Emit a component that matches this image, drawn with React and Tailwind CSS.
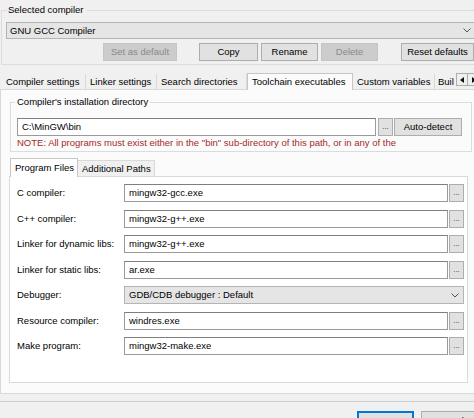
import React from "react";

function Chevron() {
  return (
    <svg width="8" height="5" viewBox="0 0 8 5">
      <path d="M0.5 0.5 L4 4 L7.5 0.5" fill="none" stroke="#555" strokeWidth="1" />
    </svg>
  );
}

function Btn({ children, className = "", disabled = false }) {
  return (
    <div
      className={
        "flex h-[18px] shrink-0 items-center justify-center border leading-[12px] " +
        (disabled
          ? "border-[#c4c4c4] bg-[#cccccc] text-[#8a8a8a] "
          : "border-[#adadad] bg-[#e1e1e1] text-[#000] ") +
        className
      }
    >
      {children}
    </div>
  );
}

function Dots({ className = "" }) {
  return (
    <div
      className={
        "flex h-[18px] w-[15px] shrink-0 items-center justify-center border border-[#adadad] bg-[#e1e1e1] text-[8px] leading-[8px] text-[#333] " +
        className
      }
    >
      ...
    </div>
  );
}

function Input({ value, className = "" }) {
  return (
    <div
      className={
        "flex h-[18px] shrink-0 items-center border border-[#9a9a9a] border-t-[#7f7f7f] bg-white pl-[4px] leading-[12px] text-[#000] " +
        className
      }
    >
      {value}
    </div>
  );
}

const rows = [
  ["C compiler:", "mingw32-gcc.exe"],
  ["C++ compiler:", "mingw32-g++.exe"],
  ["Linker for dynamic libs:", "mingw32-g++.exe"],
  ["Linker for static libs:", "ar.exe"],
  ["Debugger:", null],
  ["Resource compiler:", "windres.exe"],
  ["Make program:", "mingw32-make.exe"],
];

export default function App() {
  return (
    <div className="relative h-[418px] w-[474px] overflow-hidden bg-[#f0f0f0] font-['Liberation_Sans',Arial,sans-serif] text-[9.5px] text-[#000]">
      {/* Selected compiler group */}
      <fieldset className="ml-[1px] mt-[4px] w-[480px] border border-[#dcdcdc] pb-[3px]">
        <legend className="ml-[5px] px-[1px] pr-[3px] leading-[12px]">Selected compiler</legend>
        <div className="ml-[4px] mt-[6px] flex h-[17px] w-[470px] items-center justify-between border border-[#b4b4b4] bg-[#e5e5e5] pl-[3px] pr-[4px]">
          <span className="leading-[12px]">GNU GCC Compiler</span>
          <Chevron />
        </div>
        <div className="mt-[4px] flex pl-[101px]">
          <Btn disabled className="w-[74px]">Set as default</Btn>
          <Btn className="ml-[22px] w-[59px]">Copy</Btn>
          <Btn className="ml-[3px] w-[57px]">Rename</Btn>
          <Btn disabled className="ml-[3px] w-[57px]">Delete</Btn>
          <Btn className="ml-[23px] w-[73px]">Reset defaults</Btn>
        </div>
      </fieldset>

      {/* Main tabs */}
      <div className="relative z-10 -mb-px mt-[8px] flex h-[17px] items-end">
        <div className="mb-px flex h-[15px] w-[86px] shrink-0 items-center border-r border-[#d9d9d9] pl-[6px] leading-[12px] whitespace-nowrap">Compiler settings</div>
        <div className="mb-px flex h-[15px] w-[71px] shrink-0 items-center border-r border-[#d9d9d9] pl-[4px] leading-[12px] whitespace-nowrap">Linker settings</div>
        <div className="mb-px flex h-[15px] w-[90px] shrink-0 items-center border-r border-[#d9d9d9] pl-[4px] leading-[12px] whitespace-nowrap">Search directories</div>
        <div className="flex h-[17px] w-[106px] shrink-0 items-center border border-b-0 border-[#c6c6c6] bg-[#fbfbfb] pl-[4px] pb-[1px] leading-[12px] whitespace-nowrap">Toolchain executables</div>
        <div className="mb-px flex h-[15px] w-[82px] shrink-0 items-center border-r border-[#d9d9d9] pl-[4px] leading-[12px] whitespace-nowrap">Custom variables</div>
        <div className="mb-px flex h-[15px] w-[19px] shrink-0 items-center overflow-hidden pl-[3px] leading-[12px] whitespace-nowrap">Build options</div>
        {/* scroll arrows overlay */}
        <div className="absolute left-[456px] top-[0px] flex h-[13px]">
          <div className="flex h-[13px] w-[12px] items-center justify-center border border-[#adadad] bg-[#f0f0f0]">
            <svg width="4" height="6" viewBox="0 0 4 6"><polygon points="4,0 0,3 4,6" fill="#111" /></svg>
          </div>
          <div className="flex h-[13px] w-[12px] items-center justify-center border border-l-0 border-[#adadad] bg-[#f0f0f0]">
            <svg width="4" height="6" viewBox="0 0 4 6"><polygon points="0,0 4,3 0,6" fill="#111" /></svg>
          </div>
        </div>
      </div>

      {/* Tab page */}
      <div className="h-[305px] w-[480px] border border-[#d9d9d9] bg-[#fbfbfb]">
        <fieldset className="ml-[9px] mt-[6px] w-[462px] border border-[#dcdcdc] pb-[2px]">
          <legend className="ml-[4px] px-[2px] leading-[12px]">Compiler's installation directory</legend>
          <div className="mt-[10px] flex pl-[6px]">
            <Input value="C:\MinGW\bin" className="w-[359px]" />
            <Dots className="ml-[2px]" />
            <Btn className="ml-[1px] w-[68px]">Auto-detect</Btn>
          </div>
          <div className="mt-[1px] pl-[6px] leading-[12px] text-[#a52a2a] whitespace-nowrap">
            NOTE: All programs must exist either in the "bin" sub-directory of this path, or in any of the
          </div>
        </fieldset>

        {/* Inner tabs */}
        <div className="relative z-10 -mb-px ml-[9px] mt-[6px] flex h-[19px] items-end">
          <div className="flex h-[19px] w-[68px] shrink-0 items-center border border-b-0 border-[#c6c6c6] bg-white pl-[4px] pb-[1px] leading-[12px]">Program Files</div>
          <div className="mb-px flex h-[16px] w-[77px] shrink-0 items-center border border-b-0 border-l-0 border-[#d9d9d9] bg-[#f0f0f0] pl-[4px] leading-[12px]">Additional Paths</div>
        </div>
        <div className="ml-[8px] flex h-[207px] w-[459px] flex-col gap-[7.5px] border border-[#d9d9d9] bg-white pl-[7px] pt-[7px]">
          {rows.map(([label, value]) => (
            <div key={label} className="flex h-[18px] items-center">
              <div className="w-[107px] shrink-0 leading-[12px]">{label}</div>
              {value === null ? (
                <div className="flex h-[18px] w-[340px] shrink-0 items-center justify-between border border-[#b4b4b4] bg-[#e5e5e5] pl-[4px] pr-[4px]">
                  <span className="leading-[12px]">GDB/CDB debugger : Default</span>
                  <Chevron />
                </div>
              ) : (
                <>
                  <Input value={value} className="w-[324px]" />
                  <Dots className="ml-[1px]" />
                </>
              )}
            </div>
          ))}
        </div>
      </div>

      {/* Footer */}
      <div className="mt-[7px] h-px w-full bg-[#cdcdcd]" />
      <div className="mt-[9px] flex pl-[357px]">
        <div className="flex h-[22px] w-[57px] shrink-0 justify-center border-2 border-[#0078d7] bg-[#e1e1e1] pt-[2px] leading-[12px]">OK</div>
        <div className="ml-[7px] flex h-[22px] w-[56px] shrink-0 justify-center border border-[#adadad] bg-[#e1e1e1] pt-[3px] leading-[12px]">Cancel</div>
      </div>
    </div>
  );
}
